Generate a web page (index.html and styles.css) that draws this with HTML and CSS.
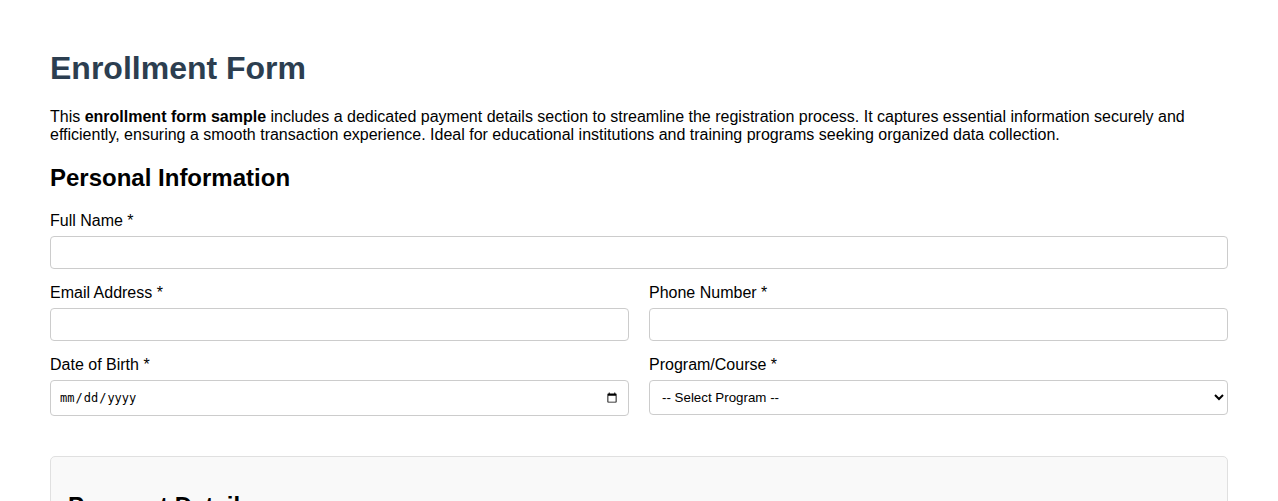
FILE: index.html
```html
<!DOCTYPE html>
<html lang="en">
<head>
<meta charset="utf-8">
<title>Enrollment Form</title>
<link rel="stylesheet" href="styles.css">
</head>
<body>
<div class="container">
  <h1 class="title">Enrollment Form</h1>
  <p class="intro">This <strong>enrollment form sample</strong> includes a dedicated payment details section to streamline the registration process. It captures essential information securely and efficiently, ensuring a smooth transaction experience. Ideal for educational institutions and training programs seeking organized data collection.</p>
  <form class="form">
    <h2 class="section-title">Personal Information</h2>
    <div class="form-group">
      <label class="label" for="fullname">Full Name *</label>
      <input class="field" type="text" id="fullname">
    </div>
    <div class="row">
      <div class="form-group">
        <label class="label" for="email">Email Address *</label>
        <input class="field" type="email" id="email">
      </div>
      <div class="form-group">
        <label class="label" for="phone">Phone Number *</label>
        <input class="field" type="tel" id="phone">
      </div>
    </div>
    <div class="row">
      <div class="form-group">
        <label class="label" for="dob">Date of Birth *</label>
        <input class="field field-date" type="date" id="dob">
      </div>
      <div class="form-group">
        <label class="label" for="program">Program/Course *</label>
        <select class="field" id="program">
          <option>-- Select Program --</option>
        </select>
      </div>
    </div>
    <div class="payment">
      <h2 class="section-title">Payment Details</h2>
      <div class="form-group">
        <label class="label" for="card">Cardholder Name *</label>
        <input class="field" type="text" id="card">
      </div>
    </div>
  </form>
</div>
</body>
</html>
```

FILE: styles.css
```css
html, body {
  margin: 0;
  padding: 0;
  background: #ffffff;
}
body {
  font-family: Arial, "Liberation Sans", sans-serif;
  font-size: 16px;
  color: #000;
}
.container {
  padding: 29px 50px 40px;
}
.title {
  font-size: 32px;
  color: #2c3e50;
  margin: 21px 0 21px;
}
.intro {
  margin: 0 0 16px;
}
.section-title {
  font-size: 24px;
  margin: 20px 0 20px;
}
.form-group {
  margin-bottom: 15px;
}
.label {
  display: block;
  margin-bottom: 6px;
}
.field {
  display: block;
  width: 100%;
  box-sizing: border-box;
  padding: 8px;
  border: 1px solid #ccc;
  border-radius: 4px;
  background: #fff;
}
.field-date {
  font-size: 12px;
  height: 36px;
}
.row {
  display: grid;
  grid-template-columns: 1fr 1fr;
  gap: 20px;
}
.payment {
  margin-top: 25px;
  padding: 15px 17px;
  background: #f9f9f9;
  border: 1px solid #e0e0e0;
  border-radius: 5px;
}
```
